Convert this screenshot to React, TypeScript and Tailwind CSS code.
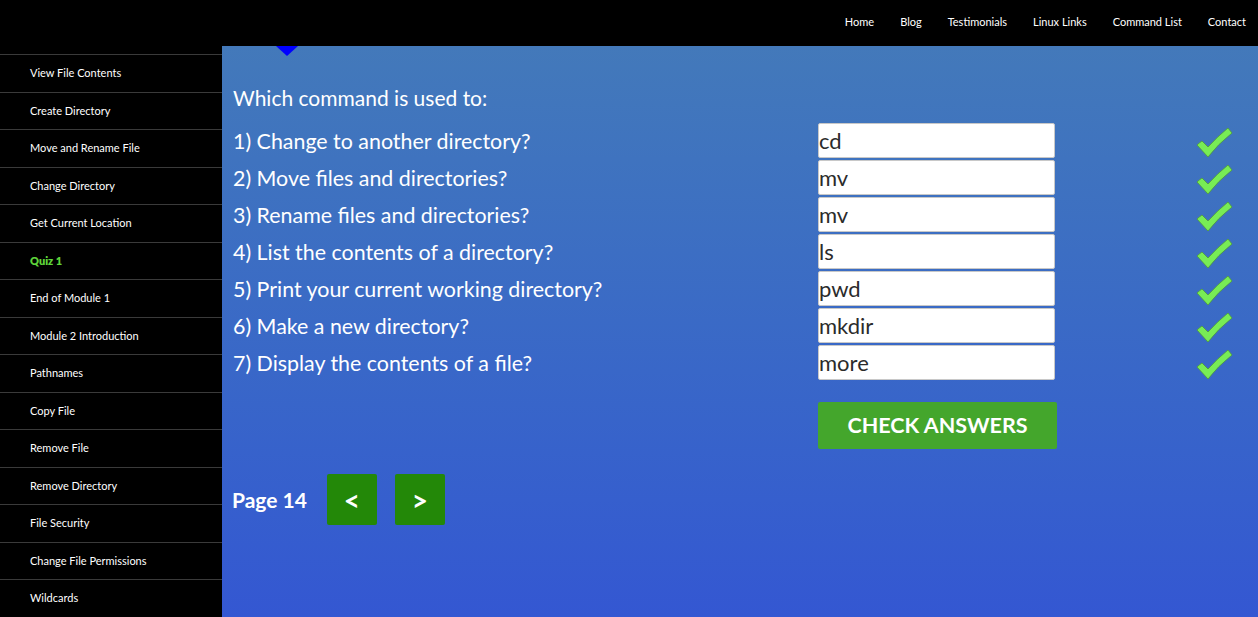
import React from 'react';

const navLinks = ['Home', 'Blog', 'Testimonials', 'Linux Links', 'Command List', 'Contact'];

const lessons = [
  'View File Contents',
  'Create Directory',
  'Move and Rename File',
  'Change Directory',
  'Get Current Location',
  'Quiz 1',
  'End of Module 1',
  'Module 2 Introduction',
  'Pathnames',
  'Copy File',
  'Remove File',
  'Remove Directory',
  'File Security',
  'Change File Permissions',
  'Wildcards',
];

const questions = [
  { q: '1) Change to another directory?', a: 'cd' },
  { q: '2) Move files and directories?', a: 'mv' },
  { q: '3) Rename files and directories?', a: 'mv' },
  { q: '4) List the contents of a directory?', a: 'ls' },
  { q: '5) Print your current working directory?', a: 'pwd' },
  { q: '6) Make a new directory?', a: 'mkdir' },
  { q: '7) Display the contents of a file?', a: 'more' },
];

function Tick() {
  return (
    <svg width="37" height="31" viewBox="0 0 37 31">
      <path
        d="M1 18 Q3 16 6 14 L12 20 Q22 9 32 1 L36 6 Q22 17 12 30 Z"
        fill="#78ec55"
        stroke="#4f9a3a"
        strokeWidth="0.8"
        strokeLinejoin="round"
      />
    </svg>
  );
}

export default function App() {
  return (
    <div className="w-[1258px] h-[617px] overflow-hidden bg-black flex flex-col font-['Lato','Open_Sans',sans-serif]">
      {/* Top bar */}
      <header className="h-[46px] shrink-0 bg-black flex items-center justify-end pr-[12px] pb-[2px]">
        <nav className="flex gap-[26px] text-[11px] text-white">
          {navLinks.map((l) => (
            <a key={l} className="cursor-pointer">{l}</a>
          ))}
        </nav>
      </header>

      <div className="flex flex-1 min-h-0">
        {/* Sidebar */}
        <aside className="w-[222px] shrink-0 bg-black pt-[8px]">
          {lessons.map((l) => (
            <div
              key={l}
              className={`h-[37.5px] border-t border-[#3a3a3a] pl-[30px] flex items-center text-[11px] ${
                l === 'Quiz 1' ? 'text-[#5ed43a] font-extrabold' : 'text-white'
              }`}
            >
              {l}
            </div>
          ))}
        </aside>

        {/* Main */}
        <main className="relative flex-1 bg-gradient-to-b from-[#4379ba] to-[#3457d2] pl-[11px] pt-[38px]">
          <div className="absolute left-[54px] top-0 w-0 h-0 border-l-[11px] border-r-[11px] border-t-[10px] border-l-transparent border-r-transparent border-t-[#0000ff]" />

          <h2 className="text-[21px] leading-[28px] text-white">Which command is used to:</h2>

          <div className="mt-[10px] flex flex-col">
            {questions.map((item) => (
              <div key={item.q} className="h-[37px] flex items-center">
                <div className="w-[585px] pt-[2px] text-[21.4px] text-white">{item.q}</div>
                <input
                  readOnly
                  value={item.a}
                  className="w-[237px] h-[35px] bg-white border border-[#c8c8c8] rounded-[2px] px-0 text-[22px] text-[#2b2b2b] outline-none font-['Lato','Open_Sans',sans-serif]"
                />
                <div className="ml-[141px] pt-[3px]">
                  <Tick />
                </div>
              </div>
            ))}
          </div>

          <button className="ml-[585px] mt-[21px] w-[239px] h-[47px] bg-[#44a62c] rounded-[2px] text-white text-[21.5px] font-bold uppercase">
            Check Answers
          </button>

          <div className="mt-[25px] flex items-center">
            <span className="text-white text-[21px] font-bold ml-[-1px]">Page 14</span>
            <button className="ml-[20px] w-[50px] h-[51px] bg-[#238808] rounded-[2px] text-white text-[28px] font-bold">&lt;</button>
            <button className="ml-[18px] w-[50px] h-[51px] bg-[#238808] rounded-[2px] text-white text-[28px] font-bold">&gt;</button>
          </div>
        </main>
      </div>
    </div>
  );
}
